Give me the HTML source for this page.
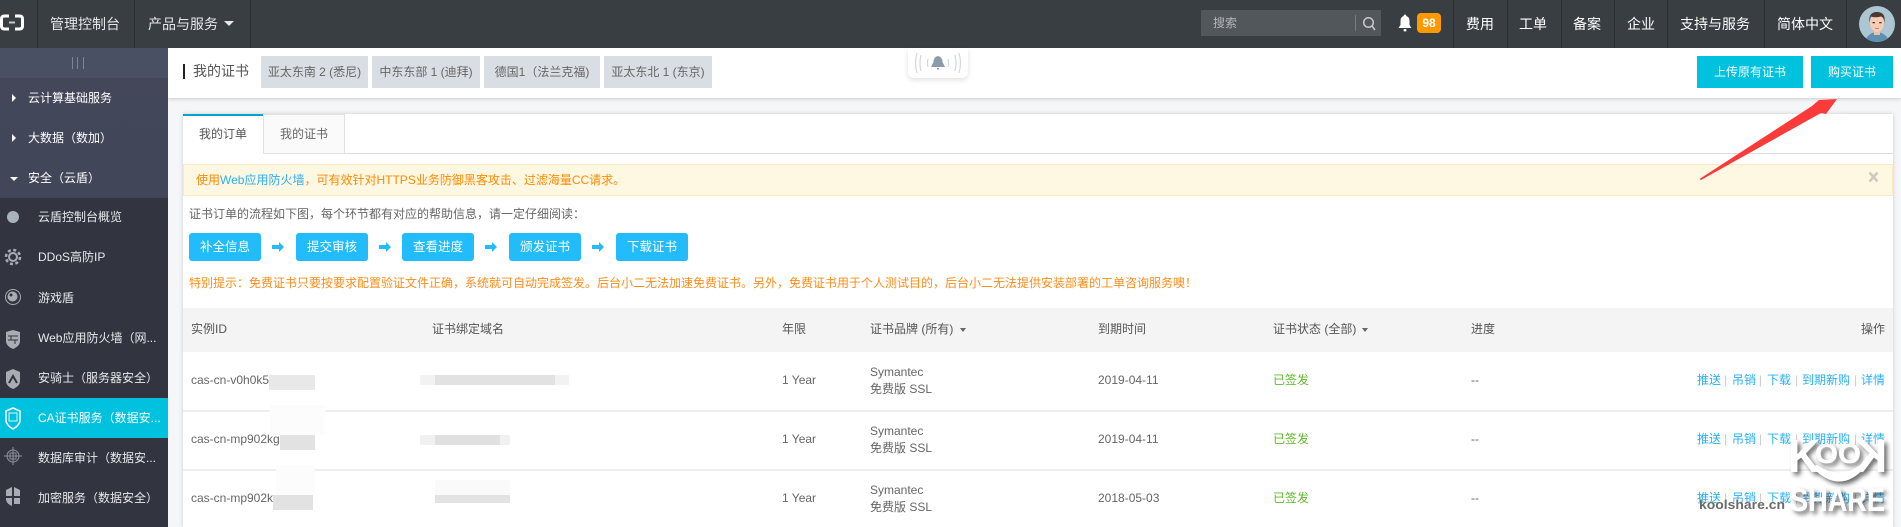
<!DOCTYPE html>
<html lang="zh-CN"><head><meta charset="utf-8"><title>我的证书</title>
<style>
*{box-sizing:border-box}
html,body{margin:0;padding:0;width:1901px;height:527px;overflow:hidden;background:#f5f6f8;font-family:"Liberation Sans","Noto Sans CJK SC",sans-serif;font-size:12px;color:#666}
.a{position:absolute}
.t{position:absolute;white-space:nowrap;line-height:20px;height:20px}
.nav{color:#fff;font-size:14px;line-height:20px;height:20px;top:14px}
.dv{position:absolute;top:0;width:1px;height:48px;background:#2a2f32}
.sec{color:#fff;left:28px}
.it{color:#e8e9ec;left:38px}
.tab{position:absolute;top:56px;height:32px;background:#d9dde4;color:#666;text-align:center;line-height:33px;white-space:nowrap}
.btn{position:absolute;top:56px;height:32px;background:#00c1de;color:#fff;text-align:center;line-height:32px}
.fl{position:absolute;top:233px;height:28px;width:72px;background:#22bcfd;color:#fff;border-radius:3px;text-align:center;line-height:28px;font-size:12.500px}
.th{color:#555}
.c{color:#666}
.g{color:#5fb92d}
.l{color:#2ab0f5}
.sp{color:#ccc}
.ln{position:absolute;left:183px;width:1710px;height:2px;background:#eeeeee}
.b{position:absolute}
</style></head><body>

<!-- main header -->
<div class="a" style="left:168px;top:48px;width:1733px;height:50px;background:#fff;box-shadow:0 1px 4px rgba(0,0,0,.18)"></div>

<!-- top bar -->
<div class="a" style="left:0;top:0;width:1901px;height:48px;background:#383e42"></div>
<svg class="a" style="left:0;top:14px" width="26" height="17" viewBox="0 0 26 17"><path d="M9 2H4.500Q1.500 2 1.500 5V12Q1.500 15 4.500 15H9M15 2H19.500Q22.500 2 22.500 5V12Q22.500 15 19.500 15H15" fill="none" stroke="#fff" stroke-width="3"/><rect x="9" y="7.500" width="6" height="2" fill="#c8cacc"/></svg>
<div class="dv" style="left:37px"></div><div class="dv" style="left:134px"></div><div class="dv" style="left:250px"></div>
<div class="t nav" style="left:50px;color:#e6e7e8">管理控制台</div>
<div class="t nav" style="left:148px;color:#e6e7e8">产品与服务</div>
<div class="a" style="left:224px;top:21px;width:0;height:0;border-left:5px solid transparent;border-right:5px solid transparent;border-top:5px solid #e6e7e8"></div>

<div class="a" style="left:1201px;top:10px;width:180px;height:26px;background:#51575b"></div>
<div class="t" style="left:1213px;top:13px;color:#b4b6b8">搜索</div>
<div class="a" style="left:1355px;top:15px;width:1px;height:16px;background:#777b7e"></div>
<svg class="a" style="left:1362px;top:16px" width="14" height="15" viewBox="0 0 14 15"><circle cx="6.500" cy="6.500" r="4.800" fill="none" stroke="#c8cacc" stroke-width="1.500"/><path d="M10 10L13 14" stroke="#c8cacc" stroke-width="1.500"/></svg>

<svg class="a" style="left:1398px;top:14px" width="14" height="18" viewBox="0 0 14 18"><path d="M7 0.500Q8.300 0.500 8.300 2Q11.500 3 11.500 7V11L13.500 14H0.500L2.500 11V7Q2.500 3 5.700 2Q5.700 0.500 7 0.500Z" fill="#fff"/><rect x="5.500" y="15" width="3" height="2.500" rx="1.200" fill="#fff"/></svg>
<div class="a" style="left:1417px;top:13px;width:24px;height:20px;background:#ff9900;border-radius:4px;color:#fff;text-align:center;line-height:20px;font-weight:bold;font-size:12px">98</div>

<div class="dv" style="left:1453px"></div><div class="dv" style="left:1507px"></div><div class="dv" style="left:1561px"></div><div class="dv" style="left:1614px"></div><div class="dv" style="left:1667px"></div><div class="dv" style="left:1764px"></div><div class="dv" style="left:1846px"></div>
<div class="t nav" style="left:1466px">费用</div>
<div class="t nav" style="left:1519px">工单</div>
<div class="t nav" style="left:1573px">备案</div>
<div class="t nav" style="left:1627px">企业</div>
<div class="t nav" style="left:1680px">支持与服务</div>
<div class="t nav" style="left:1777px">简体中文</div>

<svg class="a" style="left:1859px;top:6px" width="36" height="36" viewBox="0 0 36 36"><defs><clipPath id="av"><circle cx="18" cy="18" r="18"/></clipPath></defs><g clip-path="url(#av)"><rect width="36" height="36" fill="#adc6d3"/><path d="M6 36Q8 27 18 26Q28 27 30 36Z" fill="#5f8fb3"/><rect x="15" y="21" width="6" height="8" fill="#edbfa3"/><ellipse cx="18" cy="17" rx="7" ry="9" fill="#f6cdb4"/><path d="M10.500 17Q9 6 18 6Q27 6 25.500 17Q25 11 22 10.500Q16 12 12 10.500Q11 12 10.500 17Z" fill="#4b3a34"/><rect x="13.500" y="16" width="2.400" height="1.300" fill="#4b3a34"/><rect x="20.200" y="16" width="2.400" height="1.300" fill="#4b3a34"/><rect x="16" y="22" width="4" height="1" fill="#c98a76"/></g></svg>

<!-- sidebar -->
<div class="a" style="left:0;top:48px;width:168px;height:30px;background:#4a5064"></div>
<div class="a" style="left:0;top:78px;width:168px;height:120px;background:linear-gradient(#434759,#414659)"></div>
<div class="a" style="left:0;top:198px;width:168px;height:329px;background:#32353f"></div>
<div class="a" style="left:72px;top:57px;width:1px;height:12px;background:#7f8494"></div>
<div class="a" style="left:77px;top:57px;width:1px;height:12px;background:#7f8494"></div>
<div class="a" style="left:83px;top:57px;width:1px;height:12px;background:#7f8494"></div>

<div class="a" style="left:12px;top:94px;border-top:4.500px solid transparent;border-bottom:4.500px solid transparent;border-left:4px solid #fff"></div>
<div class="a" style="left:12px;top:134px;border-top:4.500px solid transparent;border-bottom:4.500px solid transparent;border-left:4px solid #fff"></div>
<div class="a" style="left:10px;top:177px;border-left:4.500px solid transparent;border-right:4.500px solid transparent;border-top:4px solid #fff"></div>
<div class="t sec" style="top:88px">云计算基础服务</div>
<div class="t sec" style="top:128px">大数据（数加）</div>
<div class="t sec" style="top:168px">安全（云盾）</div>

<div class="a" style="left:0;top:398px;width:168px;height:40px;background:#00c1de"></div>

<div class="t it" style="top:207px">云盾控制台概览</div>
<div class="t it" style="top:247px">DDoS高防IP</div>
<div class="t it" style="top:288px">游戏盾</div>
<div class="t it" style="top:328px">Web应用防火墙（网...</div>
<div class="t it" style="top:368px">安骑士（服务器安全）</div>
<div class="t it" style="top:408px;color:#fff">CA证书服务（数据安...</div>
<div class="t it" style="top:448px">数据库审计（数据安...</div>
<div class="t it" style="top:488px">加密服务（数据安全）</div>

<!-- sidebar icons -->
<svg class="a" style="left:0;top:198px" width="30" height="329" viewBox="0 0 30 329">
<circle cx="13" cy="19" r="6" fill="#a9b2bc"/>
<g fill="none" stroke="#a9acb2"><circle cx="13" cy="59" r="4" stroke-width="2"/><circle cx="13" cy="59" r="7" stroke-width="2.500" stroke-dasharray="3 2.500"/></g>
<g><circle cx="13" cy="99" r="7.500" fill="none" stroke="#a9acb2"/><circle cx="12.500" cy="98.500" r="5" fill="#a9acb2"/><circle cx="11" cy="97" r="1.500" fill="#32353f"/></g>
<path d="M6 134L13 132L20 134V143Q20 148 13 151Q6 148 6 143Z" fill="#a9acb2"/><path d="M8 138H18M8 142H18M11 138V142M15 142V146" stroke="#32353f" fill="none"/>
<path d="M6 174L13 171L20 174V183Q20 188 13 191Q6 188 6 183Z" fill="#a9acb2"/><path d="M9 185L13 178L17 185" stroke="#32353f" stroke-width="2" fill="none"/>
<path d="M6 213L13 210L20 213V222Q20 227 13 231Q6 227 6 222Z" fill="none" stroke="#fff" stroke-width="1.500"/><rect x="9" y="215" width="8" height="8" fill="none" stroke="#d5f6fb"/>
<circle cx="13" cy="258" r="6" fill="none" stroke="#8e9199"/><rect x="10" y="255" width="6" height="6" fill="none" stroke="#8e9199"/><path d="M13 249V267M4 258H22" stroke="#8e9199"/>
<path d="M6 292L12 289V298H6ZM14 289L20 292V298H14ZM6 300H12V308Q7 306 6 302ZM14 300H20V306H14Z" fill="#a9acb2"/>
</svg>

<!-- header content -->
<div class="a" style="left:183px;top:64px;width:2px;height:15px;background:#222"></div>
<div class="t" style="left:193px;top:61px;font-size:14px;color:#555">我的证书</div>
<div class="tab" style="left:261px;width:107px">亚太东南 2 (悉尼)</div>
<div class="tab" style="left:372px;width:108px">中东东部 1 (迪拜)</div>
<div class="tab" style="left:484px;width:116px">德国1（法兰克福)</div>
<div class="tab" style="left:604px;width:108px">亚太东北 1 (东京)</div>

<div class="a" style="left:908px;top:48px;width:60px;height:30px;background:#fff;border-radius:0 0 6px 6px;box-shadow:0 2px 6px rgba(0,0,0,.12)"></div>
<svg class="a" style="left:914px;top:50px" width="48" height="26" viewBox="0 0 48 26"><path d="M14 9Q13 13 14 17M34 9Q35 13 34 17M7 5Q5 13 7 21M41 5Q43 13 41 21M3 3Q0 13 3 23M45 3Q48 13 45 23" fill="none" stroke="#cfd8e0" stroke-width="1.200"/><path d="M24 6Q28.500 7 28.500 12L31 17H17L19.500 12Q19.500 7 24 6Z" fill="#8b9ba9"/><rect x="23" y="18" width="2" height="1.500" fill="#8b9ba9"/></svg>

<div class="btn" style="left:1697px;width:106px">上传原有证书</div>
<div class="btn" style="left:1811px;width:82px">购买证书</div>

<!-- card -->
<div class="a" style="left:183px;top:114px;width:1710px;height:413px;background:#fff;box-shadow:0 0 4px rgba(0,0,0,.18)"></div>
<div class="a" style="left:183px;top:153px;width:1710px;height:1px;background:#dcdcdc"></div>
<div class="a" style="left:183px;top:114px;width:80px;height:41px;background:#fff;border-top:2px solid #00a3c9"></div>
<div class="a" style="left:263px;top:114px;width:82px;height:40px;background:#fafafa;border:1px solid #e2e2e2"></div>
<div class="t" style="left:199px;top:124px;color:#555">我的订单</div>
<div class="t" style="left:280px;top:124px;color:#666">我的证书</div>

<div class="a" style="left:183px;top:164px;width:1710px;height:32px;background:#fef7e2;border:1px solid #fbe8c4"></div>
<div class="t" style="left:196px;top:170px;color:#ff8a00">使用<span style="color:#2ab0f5">Web应用防火墙</span>，可有效针对HTTPS业务防御黑客攻击、过滤海量CC请求。</div>
<svg class="a" style="left:1868px;top:171px" width="11" height="12" viewBox="0 0 11 12"><path d="M1.500 1.500L9.500 10.500M9.500 1.500L1.500 10.500" stroke="#cfcabb" stroke-width="2.500"/></svg>

<div class="t" style="left:189px;top:204px;color:#666">证书订单的流程如下图，每个环节都有对应的帮助信息，请一定仔细阅读：</div>

<div class="fl" style="left:189px">补全信息</div>
<div class="fl" style="left:296px">提交审核</div>
<div class="fl" style="left:402px">查看进度</div>
<div class="fl" style="left:509px">颁发证书</div>
<div class="fl" style="left:616px">下载证书</div>
<svg class="a" style="left:271px;top:241px" width="336" height="12" viewBox="0 0 336 12"><g fill="#22bcfd"><path d="M1 4H8V1L13 6L8 11V8H1Z"/><path d="M108 4H115V1L120 6L115 11V8H108Z"/><path d="M214 4H221V1L226 6L221 11V8H214Z"/><path d="M321 4H328V1L333 6L328 11V8H321Z"/></g></svg>

<div class="t" style="left:189px;top:273px;color:#ff8c1a">特别提示：免费证书只要按要求配置验证文件正确，系统就可自动完成签发。后台小二无法加速免费证书。另外，免费证书用于个人测试目的，后台小二无法提供安装部署的工单咨询服务噢！</div>

<!-- table -->
<div class="a" style="left:183px;top:308px;width:1710px;height:44px;background:#f4f4f4"></div>
<div class="t th" style="left:191px;top:319px">实例ID</div>
<div class="t th" style="left:432px;top:319px">证书绑定域名</div>
<div class="t th" style="left:782px;top:319px">年限</div>
<div class="t th" style="left:870px;top:319px">证书品牌 (所有)</div>
<div class="a" style="left:960px;top:328px;border-left:3.500px solid transparent;border-right:3.500px solid transparent;border-top:4px solid #666"></div>
<div class="t th" style="left:1098px;top:319px">到期时间</div>
<div class="t th" style="left:1273px;top:319px">证书状态 (全部)</div>
<div class="a" style="left:1362px;top:328px;border-left:3.500px solid transparent;border-right:3.500px solid transparent;border-top:4px solid #666"></div>
<div class="t th" style="left:1471px;top:319px">进度</div>
<div class="t th" style="left:1861px;top:319px">操作</div>

<div class="ln" style="top:410px"></div>
<div class="ln" style="top:469px"></div>

<!-- row 1 -->
<div class="t c" style="left:191px;top:370px">cas-cn-v0h0k5</div>
<div class="t c" style="left:782px;top:370px">1 Year</div>
<div class="t c" style="left:870px;top:362px">Symantec</div>
<div class="t c" style="left:870px;top:379px">免费版 SSL</div>
<div class="t c" style="left:1098px;top:370px">2019-04-11</div>
<div class="t g" style="left:1273px;top:370px">已签发</div>
<div class="t c" style="left:1471px;top:370px">--</div>
<div class="t l" style="left:1697px;top:370px">推送</div><div class="t sp" style="left:1724px;top:370px">|</div><div class="t l" style="left:1732px;top:370px">吊销</div><div class="t sp" style="left:1759px;top:370px">|</div><div class="t l" style="left:1767px;top:370px">下载</div><div class="t sp" style="left:1795px;top:370px">|</div><div class="t l" style="left:1802px;top:370px">到期新购</div><div class="t sp" style="left:1854px;top:370px">|</div><div class="t l" style="left:1861px;top:370px">详情</div>

<!-- row 2 -->
<div class="t c" style="left:191px;top:429px">cas-cn-mp902kg</div>
<div class="t c" style="left:782px;top:429px">1 Year</div>
<div class="t c" style="left:870px;top:421px">Symantec</div>
<div class="t c" style="left:870px;top:438px">免费版 SSL</div>
<div class="t c" style="left:1098px;top:429px">2019-04-11</div>
<div class="t g" style="left:1273px;top:429px">已签发</div>
<div class="t c" style="left:1471px;top:429px">--</div>
<div class="t l" style="left:1697px;top:429px">推送</div><div class="t sp" style="left:1724px;top:429px">|</div><div class="t l" style="left:1732px;top:429px">吊销</div><div class="t sp" style="left:1759px;top:429px">|</div><div class="t l" style="left:1767px;top:429px">下载</div><div class="t sp" style="left:1795px;top:429px">|</div><div class="t l" style="left:1802px;top:429px">到期新购</div><div class="t sp" style="left:1854px;top:429px">|</div><div class="t l" style="left:1861px;top:429px">详情</div>

<!-- row 3 -->
<div class="t c" style="left:191px;top:488px">cas-cn-mp902k</div>
<div class="t c" style="left:782px;top:488px">1 Year</div>
<div class="t c" style="left:870px;top:480px">Symantec</div>
<div class="t c" style="left:870px;top:497px">免费版 SSL</div>
<div class="t c" style="left:1098px;top:488px">2018-05-03</div>
<div class="t g" style="left:1273px;top:488px">已签发</div>
<div class="t c" style="left:1471px;top:488px">--</div>
<div class="t l" style="left:1697px;top:488px">推送</div><div class="t sp" style="left:1724px;top:488px">|</div><div class="t l" style="left:1732px;top:488px">吊销</div><div class="t sp" style="left:1759px;top:488px">|</div><div class="t l" style="left:1767px;top:488px">下载</div><div class="t sp" style="left:1795px;top:488px">|</div><div class="t l" style="left:1802px;top:488px">到期新购</div><div class="t sp" style="left:1854px;top:488px">|</div><div class="t l" style="left:1861px;top:488px">详情</div>

<!-- redaction blurs -->
<div class="b" style="left:269px;top:375px;width:46px;height:15px;background:#e8e8e8"></div>
<div class="b" style="left:272px;top:355px;width:20px;height:20px;background:#fff"></div>
<div class="b" style="left:420px;top:375px;width:149px;height:10px;background:#f2f2f2"></div>
<div class="b" style="left:435px;top:375px;width:120px;height:10px;background:#e2e2e2"></div>
<div class="b" style="left:280px;top:435px;width:35px;height:15px;background:#e2e2e2"></div>
<div class="b" style="left:270px;top:405px;width:55px;height:30px;background:#fcfcfc"></div>
<div class="b" style="left:420px;top:435px;width:90px;height:10px;background:#f0f0f0"></div>
<div class="b" style="left:435px;top:435px;width:65px;height:10px;background:#e0e0e0"></div>
<div class="b" style="left:273px;top:495px;width:40px;height:15px;background:#e2e2e2"></div>
<div class="b" style="left:276px;top:465px;width:39px;height:30px;background:#fcfcfc"></div>
<div class="b" style="left:435px;top:495px;width:75px;height:8px;background:#e2e2e2"></div>
<div class="b" style="left:435px;top:480px;width:75px;height:15px;background:#fafafa"></div>

<!-- red arrow -->
<svg class="a" style="left:1690px;top:90px" width="160" height="100" viewBox="0 0 160 100"><polygon points="9.500,89 122,16 129,10 147,9 136,24 131,23 11,90" fill="#fb3a3a"/></svg>

<!-- watermark -->
<svg class="a" style="left:1690px;top:430px" width="211" height="97" viewBox="0 0 211 97">
<defs><filter id="sh" x="-20%" y="-20%" width="150%" height="150%"><feDropShadow dx="3" dy="3" stdDeviation="2.500" flood-color="#000" flood-opacity=".6"/></filter></defs>
<g filter="url(#sh)" fill="#fff" font-family="Liberation Sans,sans-serif" font-weight="bold">
<text x="98" y="42" font-size="46" textLength="32" lengthAdjust="spacingAndGlyphs">K</text>
<text x="125" y="33" font-size="28" textLength="46" lengthAdjust="spacingAndGlyphs">OO</text>
<text x="-197" y="42" font-size="46" textLength="32" lengthAdjust="spacingAndGlyphs" transform="scale(-1,1)">K</text>
<path d="M127 35Q149 50 171 35L175 37Q150 66 122 37Z"/>
<text x="100" y="81" font-size="32" textLength="95" lengthAdjust="spacingAndGlyphs">SHARE</text>
</g>
<text x="9" y="79" font-size="13" font-weight="bold" fill="#6a6a6a" stroke="#fff" stroke-width=".6" paint-order="stroke" font-family="Liberation Sans,sans-serif" textLength="86" lengthAdjust="spacingAndGlyphs">koolshare.cn</text>
</svg>

</body></html>
